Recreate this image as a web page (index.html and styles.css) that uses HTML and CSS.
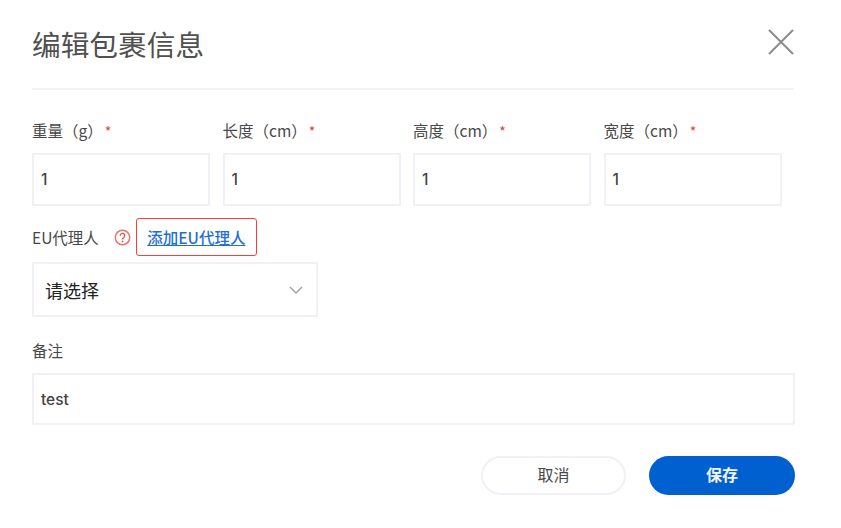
FILE: index.html
```html
<!DOCTYPE html>
<html lang="zh-CN">
<head>
<meta charset="utf-8">
<title>编辑包裹信息</title>
<link rel="stylesheet" href="styles.css">
</head>
<body>
<div class="dialog">
  <header class="head">
    <h1 class="title">编辑包裹信息</h1>
    <svg class="close" width="28" height="28" viewBox="0 0 28 28"><path d="M2 2L26 26M26 2L2 26" fill="none" stroke="#8c8c8c" stroke-width="2"/></svg>
  </header>
  <div class="dims">
    <div class="field"><div class="label">重量（g）<span class="req">*</span></div><div class="input">1</div></div>
    <div class="field"><div class="label">长度（cm）<span class="req">*</span></div><div class="input">1</div></div>
    <div class="field"><div class="label">高度（cm）<span class="req">*</span></div><div class="input">1</div></div>
    <div class="field"><div class="label">宽度（cm）<span class="req">*</span></div><div class="input">1</div></div>
  </div>
  <div class="eu-row">
    <span class="label">EU代理人</span>
    <svg class="help" width="17" height="17" viewBox="0 0 16 16"><circle cx="8" cy="8" r="6.800" fill="none" stroke="#f0716c" stroke-width="1.400"/><path d="M5.900 6.300a2.100 2.100 0 1 1 3.300 1.700c-.8.500-1.200.9-1.200 1.800" fill="none" stroke="#e8524d" stroke-width="1.300"/><circle cx="8" cy="11.700" r=".85" fill="#e8524d"/></svg>
    <div class="add-box"><a class="add-link" href="#">添加EU代理人</a></div>
  </div>
  <div class="select">
    <span>请选择</span>
    <svg width="14" height="8" viewBox="0 0 14 8"><path d="M1 1l6 6 6-6" fill="none" stroke="#a3a3a3" stroke-width="1.500"/></svg>
  </div>
  <div class="label note-label">备注</div>
  <div class="input note">test</div>
  <div class="actions">
    <button class="btn cancel" type="button">取消</button>
    <button class="btn save" type="button">保存</button>
  </div>
</div>
</body>
</html>
```
FILE: styles.css
```css
* { box-sizing: border-box; }
html, body { margin: 0; background: #fff; }
body { width: 841px; height: 528px; overflow: hidden; font-family: "Noto Sans CJK SC", "Open Sans", sans-serif; color: #4a4a4a; }
.dialog { margin-left: 32px; width: 762px; display: flex; flex-direction: column; }
.head { height: 90px; border-bottom: 2px solid #f3f3f5; display: flex; justify-content: space-between; align-items: flex-start; padding-top: 22px; }
.title { margin: 0; font-size: 28.700px; line-height: 44px; font-weight: 400; color: #505050; }
.close { margin-top: 6px; margin-right: -1px; }
.dims { display: flex; gap: 12.500px; padding-top: 29px; }
.field { width: 178px; }
.label { font-size: 15.500px; line-height: 22px; font-weight: 400; color: #484848; white-space: nowrap; }
.req { color: #e53935; margin-left: 2px; font-size: 14px; }
.input { height: 53px; margin-top: 11px; border: 2px solid #f0f0f6; padding-left: 7px; font-family: "Inter", sans-serif; font-weight: 500; font-size: 15.500px; line-height: 49px; color: #444; }
.eu-row { display: flex; align-items: center; margin-top: 12px; height: 38px; }
.help { margin-left: 15px; }
.add-box { margin-left: 5px; width: 121px; height: 38px; border: 1px solid #f5403a; border-radius: 3px; display: flex; align-items: center; justify-content: center; }
.add-link { font-size: 15.500px; font-weight: 500; color: #1f6fd6; text-decoration: underline; white-space: nowrap; }
.select { width: 285.500px; height: 55px; margin-top: 6px; border: 2px solid #f0f0f6; display: flex; align-items: center; justify-content: space-between; padding: 0 13px 0 11px; font-size: 18px; font-weight: 400; color: #222; }
.note-label { margin-top: 22px; }
.note { width: 763px; height: 52px; margin-top: 12px; line-height: 49px; }
.actions { display: flex; justify-content: flex-end; gap: 23px; margin-top: 31px; margin-right: -1px; }
.btn { height: 39px; border-radius: 20px; font-family: inherit; font-size: 16px; font-weight: 400; padding: 0 0 4px; }
.cancel { width: 145px; background: #fff; border: 2px solid #f0f0f6; color: #484848; }
.save { width: 146px; background: #0060d0; border: 0; color: #f3f6fb; font-weight: 700; }
```
